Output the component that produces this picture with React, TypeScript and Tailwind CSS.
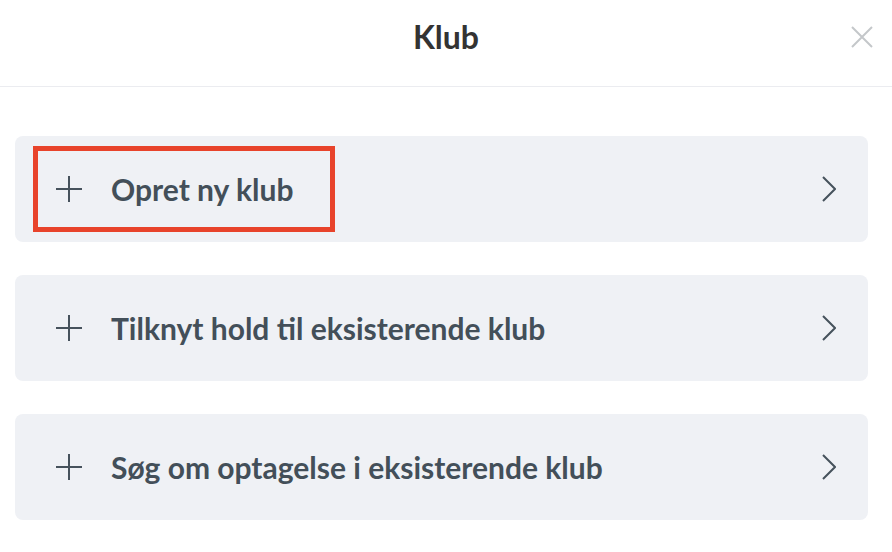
import React from 'react';

const items = ['Opret ny klub', 'Tilknyt hold til eksisterende klub', 'Søg om optagelse i eksisterende klub'];

function PlusIcon() {
  return (
    <svg width="26" height="26" viewBox="0 0 26 26" fill="none" stroke="#46525c" strokeWidth="2">
      <path d="M13 0v26M0 13h26" />
    </svg>
  );
}

function ChevronIcon() {
  return (
    <svg width="14" height="26" viewBox="0 0 14 26" fill="none" stroke="#46525c" strokeWidth="2">
      <path d="M1 1l12 12L1 25" />
    </svg>
  );
}

export default function App() {
  return (
    <div className="flex h-[552px] w-[892px] flex-col bg-white font-['Lato','Liberation_Sans',sans-serif]">
      <div className="relative flex h-[87px] shrink-0 items-center justify-center border-b border-[#ebecf0] pb-[12px]">
        <h1 className="text-[32px] font-bold text-[#333333]">Klub</h1>
        <button className="absolute right-[18px] top-[25px] flex h-[24px] w-[24px] items-center justify-center">
          <svg width="22" height="22" viewBox="0 0 22 22" fill="none" stroke="#c4c7ca" strokeWidth="2">
            <path d="M1 1l20 20M21 1L1 21" />
          </svg>
        </button>
      </div>
      <div className="flex flex-col gap-[33px] px-[15px] pt-[49px]">
        {items.map((label, i) => (
          <div key={label} className="relative flex h-[106px] w-[853px] items-center rounded-[8px] bg-[#eff1f5] pl-[41px] pr-[32px]">
            <PlusIcon />
            <span className="ml-[29px] flex-1 text-[30px] font-bold text-[#434f59]">{label}</span>
            <ChevronIcon />
            {i === 0 && (
              <div className="pointer-events-none absolute left-[18px] top-[10px] h-[86px] w-[302px] border-[5px] border-[#e8432b]" />
            )}
          </div>
        ))}
      </div>
    </div>
  );
}
